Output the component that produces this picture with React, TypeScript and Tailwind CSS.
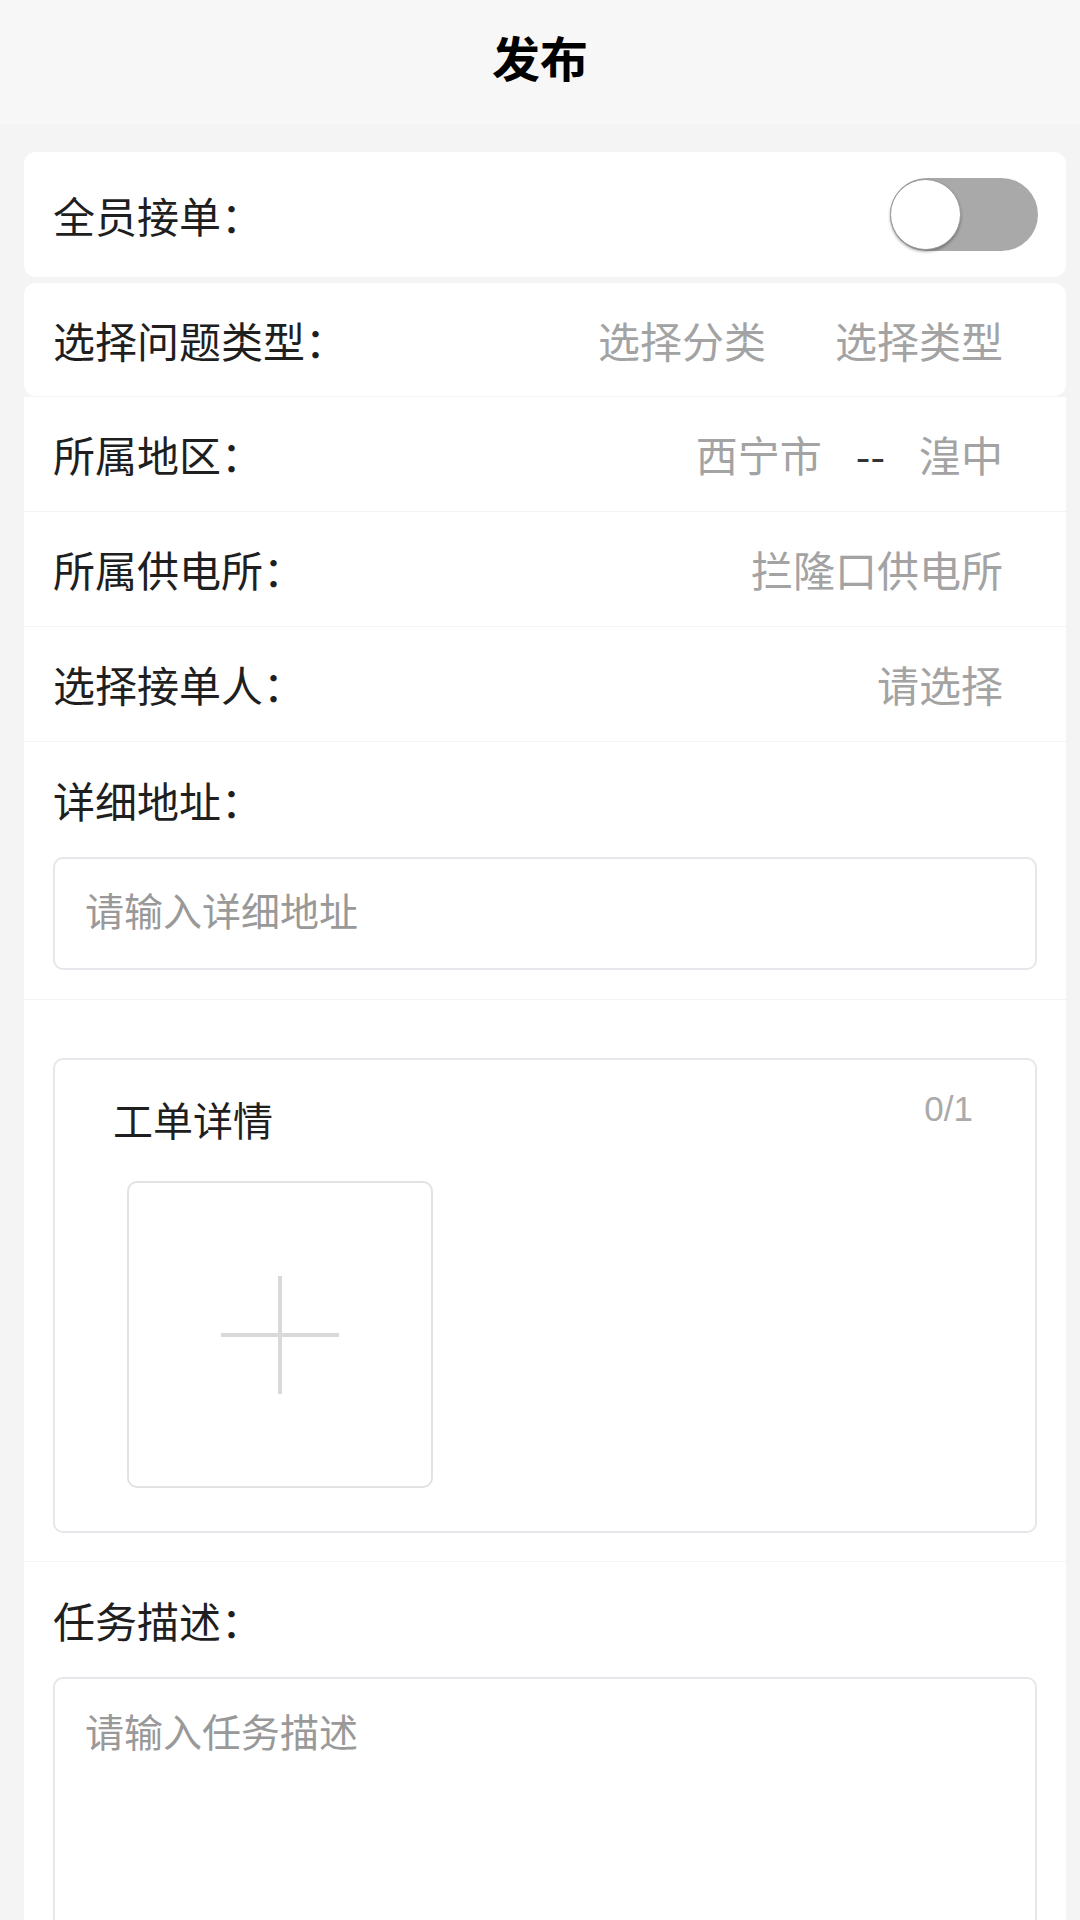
import React from 'react';

const label = 'text-[42px] leading-[42px] text-[#1f1f1f]';
const value = 'text-[42px] leading-[42px] text-[#a3a3a3]';

const Toggle = () => {
  return (
    <div className="relative w-[148px] h-[73px] rounded-full bg-[#a9a9a9]">
      <div className="absolute left-0 top-[1px] w-[71px] h-[71px] rounded-full bg-white border border-[#9a9a9a] shadow-[0_2px_3px_rgba(0,0,0,0.3)]" />
    </div>
  );
};

const SelectRow = ({ title, children }: { title: string; children: React.ReactNode }) => {
  return (
    <div className="h-[115px] flex items-center justify-between pl-[29px] pr-[63px] border-b border-[#f3f3f3]">
      <span className={label}>{title}</span>
      <div className="flex items-center">{children}</div>
    </div>
  );
};

const Publish = () => {
  return (
    <div className="min-h-screen bg-[#f4f4f4] font-['Noto_Sans_CJK_SC',sans-serif]">
      {/* Header */}
      <header className="h-[124px] pb-[12px] bg-[#f7f7f7] flex items-center justify-center">
        <h1 className="text-[48px] leading-[48px] font-bold text-black">发布</h1>
      </header>

      <div className="pl-[24px] pr-[14px] pt-[28px]">
        {/* Toggle card */}
        <div className="h-[125px] bg-white rounded-[12px] flex items-center justify-between pl-[29px] pr-[28px]">
          <span className={label}>全员接单：</span>
          <Toggle />
        </div>

        {/* Problem type card */}
        <div className="mt-[6px] h-[113px] bg-white rounded-[12px] flex items-center justify-between pl-[29px] pr-[63px]">
          <span className={label}>选择问题类型：</span>
          <div className="flex items-center gap-[69px]">
            <span className={value}>选择分类</span>
            <span className={value}>选择类型</span>
          </div>
        </div>

        {/* Form body */}
        <div className="mt-[1px] bg-white">
          <SelectRow title="所属地区：">
            <span className={value}>西宁市</span>
            <span className="mx-[34px] text-[42px] leading-[42px] text-[#333]">--</span>
            <span className={value}>湟中</span>
          </SelectRow>
          <SelectRow title="所属供电所：">
            <span className={value}>拦隆口供电所</span>
          </SelectRow>
          <SelectRow title="选择接单人：">
            <span className={value}>请选择</span>
          </SelectRow>

          {/* Address */}
          <div className="pt-[37px] pb-[29px] px-[29px] border-b border-[#f3f3f3]">
            <div className={label}>详细地址：</div>
            <input
              className="mt-[36px] w-full h-[113px] border-2 border-[#e6e7ea] rounded-[10px] px-[30px] pb-[10px] text-[39px] text-[#333] placeholder-[#999] outline-none"
              placeholder="请输入详细地址"
            />
          </div>

          {/* Work order images */}
          <div className="pt-[58px] pb-[28px] px-[29px] border-b border-[#f3f3f3]">
            <div className="border-2 border-[#e6e7ea] rounded-[10px] pt-[38px] pl-[58px] pr-[62px] pb-[43px]">
              <div className="flex items-start justify-between">
                <span className="text-[40px] leading-[42px] text-[#1f1f1f]">工单详情</span>
                <span className="-mt-[7px] text-[35px] leading-[35px] text-[#aaa] font-['Liberation_Sans',sans-serif]">0/1</span>
              </div>
              <div className="mt-[41px] ml-[14px] w-[306px] h-[307px] border-2 border-[#e2e2e2] rounded-[10px] flex items-center justify-center">
                <svg width="118" height="118" viewBox="0 0 118 118">
                  <rect x="0" y="57" width="118" height="4" fill="#d9d9d9" />
                  <rect x="57" y="0" width="4" height="118" fill="#d9d9d9" />
                </svg>
              </div>
            </div>
          </div>

          {/* Task description */}
          <div className="pt-[37px] px-[29px] pb-[40px]">
            <div className={label}>任务描述：</div>
            <textarea
              className="mt-[36px] block w-full h-[320px] border-2 border-[#e6e7ea] rounded-[10px] px-[30px] pt-[21px] text-[39px] leading-[60px] text-[#333] placeholder-[#999] outline-none resize-none"
              placeholder="请输入任务描述"
            />
          </div>
        </div>
      </div>
    </div>
  );
};

export default Publish;
